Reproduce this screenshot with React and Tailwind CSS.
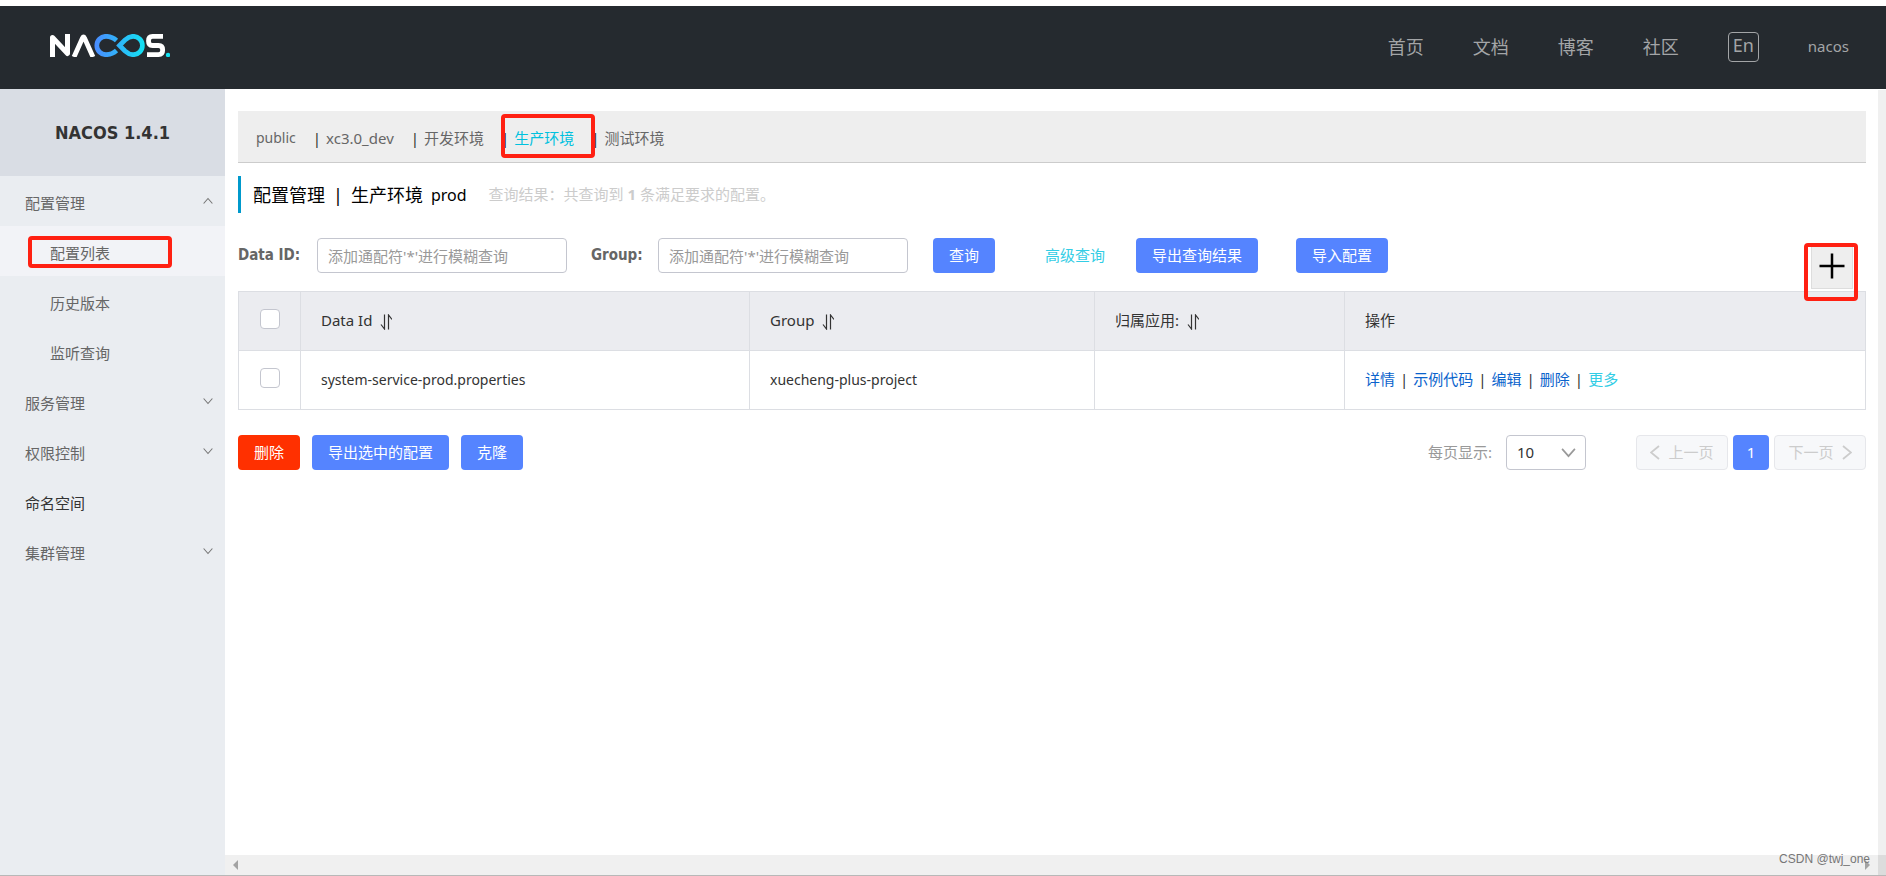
import React from 'react';

const menuItems = [
  { label: '配置管理', open: true, children: ['配置列表', '历史版本', '监听查询'] },
  { label: '服务管理', children: [] },
  { label: '权限控制', children: [] },
  { label: '命名空间' },
  { label: '集群管理', children: [] }
];

const namespaces = ['public', 'xc3.0_dev', '开发环境', '生产环境', '测试环境'];

const configs = [
  { dataId: 'system-service-prod.properties', group: 'xuecheng-plus-project', app: '' }
];

const Chevron = ({ className, d = 'M1 2 L8 10 L15 2' }) => (
  <svg className={className} viewBox="0 0 16 12" fill="none" stroke="currentColor" strokeWidth="1.8">
    <path d={d} />
  </svg>
);

const SortIcon = () => (
  <svg className="inline-block w-3 h-4 ml-2" viewBox="0 0 12 16" fill="none" stroke="currentColor" strokeWidth="1.2">
    <path d="M4.5 0.5V15L1 10.5M8.5 15.5V1L12 5.5" />
  </svg>
);

const Logo = () => (
  <svg className="w-[120px] h-[23px]" viewBox="0 0 120 23" fill="none" role="img" aria-label="NACOS">
    <defs>
      <linearGradient id="loop" gradientUnits="userSpaceOnUse" x1="45" y1="0" x2="95" y2="0">
        <stop offset="0" stopColor="#4a8cff" />
        <stop offset="1" stopColor="#12e2f2" />
      </linearGradient>
    </defs>
    <path d="M2.5 23V3.500L17.500 19.500V0" stroke="#fff" strokeWidth="5" strokeLinejoin="round" />
    <path d="M24 23L32.500 4Q33.500 2 34.500 4L43 23" stroke="#fff" strokeWidth="4.800" />
    <path d="M66.500 6.500Q62 2.300 56 2.300A9.200 9.200 0 1 0 56 20.700Q62 20.700 66.500 16.500" stroke="url(#loop)" strokeWidth="4.700" />
    <path d="M69.500 11.500L75 6Q79 2.300 83.200 2.300A9.200 9.200 0 1 1 83.200 20.700Q79 20.700 75 17Z" stroke="url(#loop)" strokeWidth="4.700" />
    <path d="M113 2.400H102.500Q98.500 2.400 98.500 6.900T102.500 11.500H108.500Q112.700 11.500 112.700 16T108.500 20.600H97" stroke="#fff" strokeWidth="4.800" />
    <circle cx="118" cy="21" r="2.200" fill="#12e2f2" />
  </svg>
);

const Button = ({ danger, children }) => (
  <button
    type="button"
    className={`h-[35px] px-4 rounded text-[15px] text-white whitespace-nowrap ${danger ? 'bg-[#ff3000]' : 'bg-[#5584ff]'}`}
  >
    {children}
  </button>
);

const Header = () => (
  <header className="mt-1.5 h-[83px] shrink-0 bg-[#252a2f] flex items-center justify-between pl-[50px] pr-[37px] pb-0.5 text-[#a3a5a7]">
    <a href="#home" className="mb-0.5"><Logo /></a>
    <nav className="flex items-center gap-[49px] text-lg">
      <a href="#index">首页</a>
      <a href="#docs">文档</a>
      <a href="#blog">博客</a>
      <a href="#community">社区</a>
      <button type="button" className="w-[31px] h-[30px] pb-1 border border-[#a3a5a7] rounded-sm leading-none">En</button>
      <a href="#user" className="text-[15px]">nacos</a>
    </nav>
  </header>
);

const Sidebar = () => (
  <aside className="w-[225px] shrink-0 bg-[#eaedf1] text-[15px] text-[#666]">
    <h1 className="h-[87px] flex items-center justify-center bg-[#d9dde4] text-lg font-bold text-[#333] font-['DejaVu_Sans_Condensed','Noto_Sans',sans-serif]">
      NACOS 1.4.1
    </h1>
    <ul>
      {menuItems.map(item => (
        <li key={item.label}>
          <a
            href="#menu"
            className={`h-[50px] pt-1 pl-[25px] pr-3 flex items-center justify-between ${item.children ? '' : 'text-[#333]'}`}
          >
            {item.label}
            {item.children && (
              <Chevron className="w-2.5 h-2 mb-1 text-[#777]" d={item.open ? 'M1 10 L8 2 L15 10' : 'M1 2 L8 10 L15 2'} />
            )}
          </a>
          {item.open && (
            <ul>
              {item.children.map((child, i) => (
                <li key={child} className={i === 0 ? 'relative bg-[#f2f3f7]' : ''}>
                  <a href="#list" className="h-[50px] pt-1 pl-[50px] flex items-center">{child}</a>
                  {i === 0 && (
                    <span className="absolute left-7 top-2.5 w-36 h-8 border-4 border-[#ff2012] rounded" />
                  )}
                </li>
              ))}
            </ul>
          )}
        </li>
      ))}
    </ul>
  </aside>
);

const NamespaceBar = () => (
  <div className="h-[52px] pt-[3px] pl-[18px] flex items-center bg-[#eee] border-b border-[#ccc] text-[15px]">
    {namespaces.map((name, i) => (
      <div key={name} className="relative flex items-center">
        {i > 0 && <span className="mr-[5px] text-[#333]">|</span>}
        <a
          href="#namespace"
          className={`mr-[17px] ${i === 0 ? 'text-sm' : ''} ${name === '生产环境' ? 'text-[#00c1de]' : 'text-[#666]'}`}
        >
          {name}
        </a>
        {name === '生产环境' && (
          <span className="absolute left-0 -top-[13px] -right-1 h-11 border-4 border-[#ff2012] rounded z-10" />
        )}
      </div>
    ))}
  </div>
);

const SearchForm = () => (
  <form className="relative mt-[25px] flex items-center text-[15px] text-[#666]">
    <label htmlFor="dataId" className="w-[79px] font-bold font-['DejaVu_Sans_Condensed','Noto_Sans',sans-serif]">Data ID:</label>
    <input
      id="dataId"
      placeholder="添加通配符'*'进行模糊查询"
      className="w-[250px] h-[35px] px-2.5 bg-white border border-[#c4c6cf] rounded placeholder:text-[#999]"
    />
    <label htmlFor="group" className="ml-6 w-[67px] font-bold font-['DejaVu_Sans_Condensed','Noto_Sans',sans-serif]">Group:</label>
    <input
      id="group"
      placeholder="添加通配符'*'进行模糊查询"
      className="w-[250px] h-[35px] px-2.5 mr-[25px] bg-white border border-[#c4c6cf] rounded placeholder:text-[#999]"
    />
    <Button>查询</Button>
    <a href="#advanced" className="ml-[50px] mr-[31px] text-[#33cde5]">高级查询</a>
    <div className="flex gap-[38px]">
      <Button>导出查询结果</Button>
      <Button>导入配置</Button>
    </div>
    <button
      type="button"
      aria-label="新建配置"
      className="absolute right-[13px] top-[5px] w-[42px] h-[46px] flex items-center justify-center bg-[#eee] border border-[#ddd]"
    >
      <svg className="w-[26px] h-[26px]" viewBox="0 0 26 26" stroke="#000" strokeWidth="2.500">
        <path d="M13 0.500V25.500M0.500 13H25.500" />
      </svg>
    </button>
    <span className="absolute right-2 top-[5px] w-[54px] h-[58px] border-4 border-[#ff2012] rounded z-10 pointer-events-none" />
  </form>
);

const Checkbox = ({ label }) => (
  <input
    type="checkbox"
    aria-label={label}
    className="block mx-auto w-5 h-5 appearance-none bg-white border border-[#c4c6cf] rounded"
  />
);

const ConfigTable = () => (
  <table className="mt-[18px] w-full table-fixed border-collapse text-[15px] text-[#333] text-left">
    <colgroup>
      <col className="w-[62px]" />
      <col />
      <col className="w-[345px]" />
      <col className="w-[250px]" />
      <col className="w-[521px]" />
    </colgroup>
    <thead>
      <tr className="h-[59px] bg-[#ebecf0]">
        <th className="border border-[#dcdee3] pb-1 font-normal"><Checkbox label="全选" /></th>
        <th className="border border-[#dcdee3] px-5 pb-0.5 font-normal">Data Id<SortIcon /></th>
        <th className="border border-[#dcdee3] px-5 pb-0.5 font-normal">Group<SortIcon /></th>
        <th className="border border-[#dcdee3] px-5 pb-0.5 font-normal">归属应用:<SortIcon /></th>
        <th className="border border-[#dcdee3] px-5 pb-0.5 font-normal">操作</th>
      </tr>
    </thead>
    <tbody>
      {configs.map(config => (
        <tr key={config.dataId} className="h-[59px]">
          <td className="border border-[#dcdee3] pb-1"><Checkbox label={config.dataId} /></td>
          <td className="border border-[#dcdee3] px-5 text-sm">{config.dataId}</td>
          <td className="border border-[#dcdee3] px-5 text-sm">{config.group}</td>
          <td className="border border-[#dcdee3] px-5 text-sm">{config.app}</td>
          <td className="border border-[#dcdee3] px-5 pb-0.5">
            <div className="flex gap-[5px]">
              <a href="#detail" className="text-[#0a63cc]">详情</a>|
              <a href="#code" className="text-[#0a63cc]">示例代码</a>|
              <a href="#edit" className="text-[#0a63cc]">编辑</a>|
              <a href="#delete" className="text-[#0a63cc]">删除</a>|
              <a href="#more" className="text-[#33cde5]">更多</a>
            </div>
          </td>
        </tr>
      ))}
    </tbody>
  </table>
);

const Footer = () => (
  <div className="mt-[25px] flex items-center justify-between text-[15px]">
    <div className="flex gap-3">
      <Button danger>删除</Button>
      <Button>导出选中的配置</Button>
      <Button>克隆</Button>
    </div>
    <div className="flex items-center">
      <label htmlFor="pageSize" className="mr-3.5 text-[#999]">每页显示:</label>
      <div className="relative mr-[50px]">
        <select id="pageSize" className="w-20 h-[35px] pl-2.5 appearance-none bg-white border border-[#c4c6cf] rounded text-[#333]">
          <option>10</option>
        </select>
        <Chevron className="absolute right-2.5 top-3 w-[15px] h-[11px] text-[#999] pointer-events-none" />
      </div>
      <div className="flex gap-[5px]">
        <button type="button" disabled className="w-[92px] h-[35px] flex items-center justify-center gap-2 bg-[#f7f8fa] border border-[#e6e7eb] rounded text-[#ccc]">
          <svg className="w-2.5 h-[15px]" viewBox="0 0 10 15" fill="none" stroke="currentColor" strokeWidth="1.800"><path d="M9 1L1 7.500L9 14" /></svg>
          上一页
        </button>
        <button type="button" className="w-9 h-[35px] rounded bg-[#5584ff] text-white">1</button>
        <button type="button" disabled className="w-[92px] h-[35px] flex items-center justify-center gap-2 bg-[#f7f8fa] border border-[#e6e7eb] rounded text-[#ccc]">
          下一页
          <svg className="w-2.5 h-[15px]" viewBox="0 0 10 15" fill="none" stroke="currentColor" strokeWidth="1.800"><path d="M1 1L9 7.500L1 14" /></svg>
        </button>
      </div>
    </div>
  </div>
);

export default function App() {
  return (
    <div className="h-screen flex flex-col overflow-hidden bg-white border-b border-[#b8b8b8] font-['Noto_Sans','Noto_Sans_CJK_SC',sans-serif]">
      <Header />
      <div className="flex-1 min-h-0 flex">
        <Sidebar />
        <div className="relative flex-1 min-w-0 flex flex-col">
          <div className="flex-1 min-h-0 flex">
            <main className="flex-1 min-w-0 pl-[13px] pr-3 pt-[22px]">
              <NamespaceBar />
              <div className="mt-[13px] h-[37px] pl-3 flex items-center border-l-3 border-[#09c]">
                <h2 className="flex items-center gap-2 text-lg text-black">
                  <span>配置管理</span><span>|</span><span>生产环境</span><span className="text-base">prod</span>
                </h2>
                <p className="ml-[22px] text-[15px] text-[#ccc]">
                  查询结果：共查询到 <strong>1</strong> 条满足要求的配置。
                </p>
              </div>
              <SearchForm />
              <ConfigTable />
              <Footer />
            </main>
            <div className="w-2 mt-px bg-[#f0f0f0]" />
          </div>
          <div className="h-5 flex items-center justify-between bg-[#f0f0f0] pl-2">
            <svg className="w-[5px] h-[10px]" viewBox="0 0 5 10" fill="#a3a3a3"><path d="M5 0V10L0 5Z" /></svg>
            <div className="h-full flex items-center">
              <svg className="w-[5px] h-[10px] mr-2" viewBox="0 0 5 10" fill="#a3a3a3"><path d="M0 0V10L5 5Z" /></svg>
              <div className="w-2 h-full bg-[#dcdcdc]" />
            </div>
          </div>
          <span className="absolute right-4 bottom-2 text-xs text-[#777] font-['Liberation_Sans',sans-serif]">CSDN @twj_one</span>
        </div>
      </div>
    </div>
  );
}
